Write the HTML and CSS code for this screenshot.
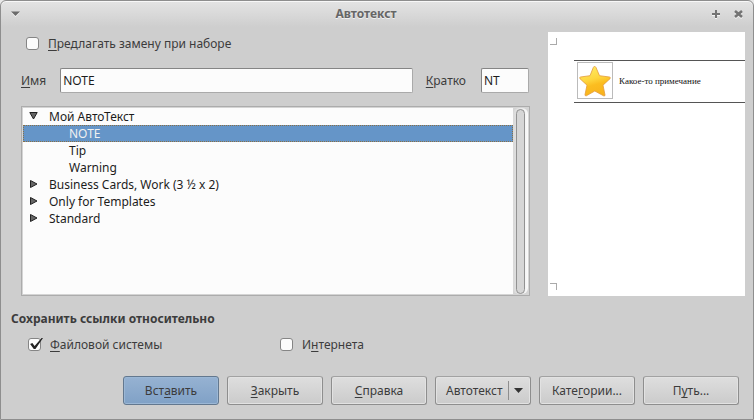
FILE: index.html
```html
<!DOCTYPE html>
<html lang="ru">
<head>
<meta charset="utf-8">
<title>Автотекст</title>
<link rel="stylesheet" href="styles.css">
</head>
<body>
<div class="dialog" role="dialog" aria-labelledby="title">
  <header class="titlebar">
    <button class="wm" aria-label="Меню окна"><svg width="9" height="6" viewBox="0 0 9 6"><path d="M0 1.500h9L4.500 6z" fill="#f4f4f4"/><path d="M0 .5h9L4.500 5z" fill="#6c6c6c"/></svg></button>
    <h1 id="title">Автотекст</h1>
    <div class="wm-group">
      <button class="wm" aria-label="Развернуть"><svg width="8" height="9" viewBox="0 0 8 9"><path d="M4 1v8M0 5h8" stroke="#f4f4f4" stroke-width="2"/><path d="M4 0v8M0 4h8" stroke="#737373" stroke-width="2"/></svg></button>
      <button class="wm" aria-label="Закрыть окно"><svg width="9" height="9" viewBox="0 0 9 9"><path d="M1 2l7 6M8 2L1 8" stroke="#f4f4f4" stroke-width="2.600"/><path d="M1 1l7 6M8 1L1 7" stroke="#737373" stroke-width="2.600"/></svg></button>
    </div>
  </header>
  <main class="content">
    <section class="editor">
      <label class="check suggest"><input type="checkbox"><span><u>П</u>редлагать замену при наборе</span></label>
      <div class="fields">
        <label for="name"><u>И</u>мя</label>
        <input class="text name" id="name" type="text" value="NOTE">
        <label for="short"><u>К</u>ратко</label>
        <input class="text short" id="short" type="text" value="NT">
      </div>
      <div class="tree-frame">
        <ul class="tree" role="tree">
          <li role="treeitem" aria-expanded="true"><svg class="arrow" width="9" height="8" viewBox="0 0 9 8"><path d="M.8.5h7.400L4.500 7z" fill="#666" stroke="#222"/></svg>Мой АвтоТекст</li>
          <li class="child selected" role="treeitem" aria-selected="true">NOTE</li>
          <li class="child" role="treeitem">Tip</li>
          <li class="child" role="treeitem">Warning</li>
          <li role="treeitem" aria-expanded="false"><svg class="arrow" width="9" height="8" viewBox="0 0 9 8"><path d="M1.500.5v7l6.500-3.500z" fill="#666" stroke="#222"/></svg>Business Cards, Work (3 ½ x 2)</li>
          <li role="treeitem" aria-expanded="false"><svg class="arrow" width="9" height="8" viewBox="0 0 9 8"><path d="M1.500.5v7l6.500-3.500z" fill="#666" stroke="#222"/></svg>Only for Templates</li>
          <li role="treeitem" aria-expanded="false"><svg class="arrow" width="9" height="8" viewBox="0 0 9 8"><path d="M1.500.5v7l6.500-3.500z" fill="#666" stroke="#222"/></svg>Standard</li>
        </ul>
        <div class="scrollbar"><div class="thumb"></div></div>
      </div>
    </section>
    <section class="preview" aria-label="Просмотр">
      <span class="corner top"></span>
      <div class="note">
        <div class="picture">
          <svg width="32" height="32" viewBox="0 0 32 32">
            <defs><linearGradient id="gold" x1=".2" y1="0" x2=".5" y2="1"><stop offset="0" stop-color="#ffec66"/><stop offset=".45" stop-color="#fed63e"/><stop offset=".65" stop-color="#fbbd20"/><stop offset="1" stop-color="#f8b31c"/></linearGradient></defs>
            <path d="M15.500 1.500q1 0 1.500 1l3.500 8.200 10 1.300q1.500.5.500 1.700l-7 6.500 2 9.800q0 1.500-1.500.8L15.800 26l-8.500 4.800q-1.500.3-1.300-1.200l2-9.400-7-6.500q-1-1.300.5-1.700l9.500-1.300L14.300 2.500q.4-1 1.200-1z" fill="url(#gold)" stroke="#e39a3c" stroke-width=".8"/>
          </svg>
        </div>
        <p>Какое-то примечание</p>
      </div>
      <span class="corner bottom"></span>
    </section>
  </main>
  <fieldset class="links">
    <legend>Сохранить ссылки относительно</legend>
    <label class="check"><input type="checkbox" checked><span><u>Ф</u>айловой системы</span></label>
    <label class="check"><input type="checkbox"><span>И<u>н</u>тернета</span></label>
  </fieldset>
  <footer class="actions">
    <button class="btn primary">Вст<u>а</u>вить</button>
    <button class="btn"><u>З</u>акрыть</button>
    <button class="btn"><u>С</u>правка</button>
    <button class="btn menu" aria-haspopup="menu"><span>Автотекст</span><i></i><svg width="9" height="5" viewBox="0 0 9 5"><path d="M0 0h9L4.500 5z" fill="#333"/></svg></button>
    <button class="btn">Кате<u>г</u>ории...</button>
    <button class="btn">П<u>у</u>ть...</button>
  </footer>
</div>
</body>
</html>
```
FILE: styles.css
```css
* { box-sizing: border-box; }

body {
  margin: 0;
  background: #e8e8e8;
  color: #3c3c3c;
  font: 12px/17px "Noto Sans", "Open Sans", sans-serif;
}

button, input { font: inherit; color: inherit; margin: 0; }

u {
  text-decoration: underline 1px;
  text-underline-offset: 2px;
  text-decoration-skip-ink: none;
}

.dialog {
  display: flex;
  flex-direction: column;
  min-height: 100vh;
  border: 1px solid #8e8e8e;
  border-radius: 6px 6px 0 0;
  background: linear-gradient(#e4e4e4, #cecece 26px);
  box-shadow: inset 0 1px #f8f8f8;
}

/* Title bar */
.titlebar {
  display: grid;
  grid-template-columns: auto 1fr auto;
  align-items: center;
  height: 26px;
  padding: 0 10px;
}

.titlebar h1 {
  margin: 0;
  color: #666;
  font-size: 12px;
  line-height: 16px;
  font-weight: 700;
  text-align: center;
  text-shadow: 0 1px #f0f0f0;
}

.wm {
  display: flex;
  padding: 0;
  border: 0;
  background: none;
}

.wm-group {
  display: flex;
  gap: 14px;
}

/* Entry editor and preview */
.content {
  display: flex;
  flex: 1;
  gap: 18px;
  padding: 5px 8px 0 20px;
}

.editor {
  display: flex;
  flex: 1;
  flex-direction: column;
}

.check {
  display: flex;
  align-items: center;
  gap: 9px;
}

.check input {
  appearance: none;
  width: 13px;
  height: 13px;
  border: 1px solid #858585;
  border-radius: 3px;
  background: #fcfcfc;
}

.check input:checked {
  position: relative;
}

.check input:checked::after {
  content: "";
  position: absolute;
  inset: -1px -3px 0 0;
  background: #222;
  clip-path: polygon(8% 50%, 24% 42%, 40% 66%, 90% 0, 100% 0, 46% 92%, 34% 92%);
}

.suggest { margin: 3px 0 0 5px; }

.fields {
  display: flex;
  align-items: center;
  margin: 16px 1px 13px 0;
}

.text {
  min-width: 0;
  height: 25px;
  padding: 0 2px;
  border: 1px solid #aaa;
  border-top-color: #858585;
  border-left-color: #858585;
  border-radius: 2px;
  background: #fcfcfc;
  color: #1c1c1c;
}

.name { flex: 1; margin: 0 13px 0 14px; }
.short { width: 48px; margin-left: 15px; }

.tree-frame {
  display: flex;
  flex: 1;
  padding: 1px;
  border: 1px solid #acacac;
  background: #d4d4d4;
}

.tree {
  flex: 1;
  margin: 0;
  padding: 0;
  background: #fcfcfc;
  color: #1c1c1c;
  list-style: none;
}

.tree li {
  display: flex;
  height: 17px;
  padding-left: 6px;
}

.tree .child { padding-left: 46px; }

.tree .selected {
  outline: 1px dotted #8a7045;
  outline-offset: -1px;
  background: #6595c8;
  color: #f0f0f0;
}

.arrow { margin: 4px 11px 0 0; }

.scrollbar {
  display: flex;
  width: 15px;
  padding: 1px 3px 0;
  border-radius: 6px;
  background: linear-gradient(90deg, #d8d8d8, #fafafa);
}

.thumb {
  flex: 1;
  border: 1px solid #929292;
  border-radius: 5px;
  background: #d6d6d6;
}

.preview {
  display: flex;
  flex: 0 0 197px;
  flex-direction: column;
  background: #fff;
}

.corner {
  width: 7px;
  height: 7px;
  margin-left: 2px;
  border-right: 1px solid #aaa;
}

.corner.top { margin-top: 6px; border-bottom: 1px solid #aaa; }
.corner.bottom { margin: auto 0 6px 2px; border-top: 1px solid #aaa; }

.note {
  display: flex;
  align-items: center;
  gap: 6px;
  margin: 15px 0 0 26px;
  padding: 1px 3px 3px;
  border: solid #555;
  border-width: 1px 0;
}

.note p {
  margin: 0;
  color: #111;
  font: 9px/12px "Liberation Serif", serif;
  white-space: nowrap;
}

.picture {
  display: flex;
  padding: 2px 1px 1px;
  border: 1px solid #bbb;
}

/* Link options */
.links {
  display: grid;
  grid-template-columns: 252px 1fr;
  margin: 14px 0 0;
  padding: 9px 0 0 27px;
  border: 0;
}

.links legend {
  margin-left: -17px;
  padding: 0;
  font-weight: 700;
}

/* Buttons */
.actions {
  display: flex;
  justify-content: flex-end;
  gap: 8px;
  padding: 23px 14px 14px;
}

.btn {
  flex: 0 1 96px;
  height: 29px;
  padding: 0;
  border: 1px solid #8e8e8e;
  border-top-color: #a2a2a2;
  border-radius: 3px;
  background: linear-gradient(#dedede, #cbcbcb);
  box-shadow: inset 0 0 0 1px #e2e2e2;
}

.primary {
  border-color: #63788f;
  background: linear-gradient(#96b2d2, #80a1c6);
  box-shadow: inset 0 0 0 1px #9bb7d5;
}

.menu {
  display: flex;
  align-items: center;
  justify-content: space-between;
  padding: 0 7px 0 10px;
}

.menu i {
  width: 1px;
  height: 19px;
  background: #8e8e8e;
}
```
